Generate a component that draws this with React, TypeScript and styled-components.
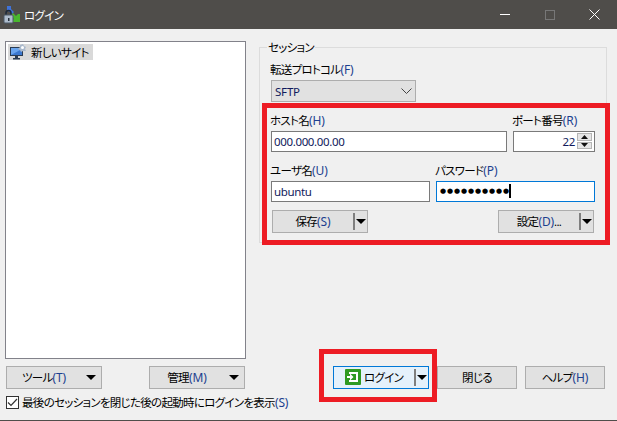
import styled, { createGlobalStyle } from 'styled-components';

const GlobalStyle = createGlobalStyle`
  html, body {
    margin: 0;
    padding: 0;
    background: #f0f0f0;
  }
  * {
    box-sizing: border-box;
  }
`;

const LATIN_BLUE = '#1c3f8f';

const Window = styled.div`
  width: 617px;
  height: 421px;
  position: relative;
  overflow: hidden;
  display: flex;
  flex-direction: column;
  background: #f0f0f0;
  border-bottom: 1px solid #4f4d4a;
  color: #000;
  font-family: "Noto Sans", "Noto Sans CJK JP", sans-serif;
  font-size: 11.5px;
  letter-spacing: -0.7px;
  font-feature-settings: "palt";
`;

const TitleBar = styled.div`
  height: 29px;
  flex-shrink: 0;
  display: flex;
  align-items: center;
  padding-left: 3px;
  background: #4f4d4a;
  color: #fff;
`;

const TitleText = styled.span`
  margin-left: 3px;
`;

const WindowControls = styled.div`
  margin-left: auto;
  display: flex;
`;

const ControlButton = styled.div`
  width: 45px;
  height: 29px;
  display: flex;
  align-items: center;
  justify-content: center;
`;

const Content = styled.div`
  flex: 1;
  display: flex;
  padding: 12px 0 0 5px;
`;

const LeftColumn = styled.div`
  width: 241px;
  display: flex;
  flex-direction: column;
`;

const SiteTree = styled.div`
  height: 318px;
  padding: 2px;
  background: #fff;
  border: 1px solid #82828a;
`;

const SiteRow = styled.div`
  width: 85px;
  height: 16px;
  display: flex;
  align-items: center;
  gap: 4px;
  padding-left: 2px;
  background: #d9d9d9;
  white-space: nowrap;
`;

const LeftButtons = styled.div`
  margin: 7px 1px 0;
  display: flex;
  justify-content: space-between;
`;

const CheckRow = styled.label`
  margin: 6px 0 0 1px;
  display: flex;
  align-items: center;
  gap: 3px;
  height: 14px;
  white-space: nowrap;
`;

const CheckBox = styled.span`
  width: 13px;
  height: 13px;
  display: flex;
  align-items: center;
  justify-content: center;
  background: #fff;
  border: 1px solid #333;
`;

const RightColumn = styled.div`
  margin-left: 13px;
  width: 348px;
  display: flex;
  flex-direction: column;
`;

const GroupBox = styled.div`
  margin-top: 6px;
  height: 196px;
  position: relative;
  padding: 15px 0 0 11px;
  border: 1px solid #dcdcdc;
`;

const GroupLegend = styled.span`
  position: absolute;
  top: -7px;
  left: 7px;
  padding: 0 1px;
  line-height: 13px;
  background: #f0f0f0;
`;

const FieldLabel = styled.div`
  height: 16px;
  line-height: 14px;
  margin-left: -1px;
  white-space: nowrap;
`;

const SelectBox = styled.div`
  width: 145px;
  height: 22px;
  margin-top: 1px;
  display: flex;
  align-items: center;
  justify-content: space-between;
  padding: 0 3px;
  background: #e1e1e1;
  border: 1px solid #adadad;
  color: #111a5c;
  letter-spacing: -0.2px;
`;

const FieldRow = styled.div<{ $top: number }>`
  margin-top: ${(p) => p.$top}px;
  display: flex;
  gap: 6px;
`;

const Field = styled.div<{ $width: number }>`
  width: ${(p) => p.$width}px;
`;

const TextBox = styled.div<{ $focused?: boolean; $height: number }>`
  height: ${(p) => p.$height}px;
  margin-top: 1px;
  display: flex;
  align-items: center;
  padding: 0 2px 1px;
  background: #fff;
  border: 1px solid ${(p) => (p.$focused ? '#0078d7' : '#7a7a7a')};
  color: #111a5c;
  letter-spacing: -0.35px;
`;

const PortValue = styled.span`
  margin-left: auto;
  margin-right: 2px;
`;

const PasswordDots = styled.span`
  margin-left: 1px;
  font-size: 7px;
  font-family: "DejaVu Sans", sans-serif;
  letter-spacing: 0.9px;
  color: #000;
`;

const Caret = styled.span`
  width: 2px;
  height: 14px;
  margin-left: -1px;
  background: #000;
`;

const Spinner = styled.div`
  width: 15px;
  height: 16px;
  display: flex;
  flex-direction: column;
  gap: 1px;
`;

const SpinButton = styled.div`
  flex: 1;
  display: flex;
  align-items: center;
  justify-content: center;
  background: #e6e6e6;
  border: 1px solid #b5b5b5;
`;

const GroupButtons = styled.div`
  margin: 8px 12px 0 1px;
  display: flex;
  justify-content: space-between;
`;

const Button = styled.div<{ $width: number; $primary?: boolean }>`
  width: ${(p) => p.$width}px;
  height: 23px;
  padding-bottom: 1px;
  display: flex;
  align-items: center;
  justify-content: center;
  flex-shrink: 0;
  white-space: nowrap;
  background: ${(p) => (p.$primary ? '#e5f1fb' : '#e1e1e1')};
  border: 1px solid ${(p) => (p.$primary ? '#0078d7' : '#adadad')};
`;

const ButtonLabel = styled.span`
  flex: 1;
  display: flex;
  align-items: center;
  justify-content: center;
`;

const ButtonIcon = styled.span`
  display: flex;
  margin-right: 3px;
`;

const SplitDivider = styled.span`
  width: 2px;
  height: 17px;
  background: #7f7f7f;
`;

const ArrowZone = styled.span<{ $width: number }>`
  width: ${(p) => p.$width}px;
  display: flex;
  justify-content: center;
`;

const Arrow = styled.span`
  width: 0;
  height: 0;
  border-left: 5px solid transparent;
  border-right: 5px solid transparent;
  border-top: 5px solid #000;
`;

const Accel = styled.span`
  color: ${LATIN_BLUE};
  font-size: 12px;
  letter-spacing: -0.1px;
`;

const DialogButtons = styled.div`
  margin: 123px 0 0 74px;
  display: flex;
  gap: 8px;
`;

const RedFrame = styled.div<{ $x: number; $y: number; $w: number; $h: number }>`
  position: absolute;
  left: ${(p) => p.$x}px;
  top: ${(p) => p.$y}px;
  width: ${(p) => p.$w}px;
  height: ${(p) => p.$h}px;
  border: 5px solid #ed1c24;
  pointer-events: none;
`;

function AppIcon() {
  return (
    <svg width="18" height="18" viewBox="0 0 18 18">
      <path d="M4 0h4v3l3 3-2 2-5-4z" fill="#3f73d8" />
      <path d="M10 7l3 3 2-2 2 0v8H9v-2l2-1-3-3z" fill="#49b82e" />
      <path d="M3 9V7a2.5 2.5 0 0 1 5 0v2" fill="none" stroke="#1d2a3a" strokeWidth="1.5" />
      <rect x="1" y="9" width="9" height="8" rx="1" fill="#aebccc" stroke="#4d5a68" />
      <rect x="5" y="12" width="1.5" height="3" fill="#26303a" />
    </svg>
  );
}

function SiteIcon() {
  return (
    <svg width="17" height="16" viewBox="0 0 17 16">
      <rect x="0.5" y="3.5" width="12" height="8" fill="#6aa5ee" stroke="#2b3c52" />
      <path d="M1 11l11-6v6z" fill="#3c78cf" />
      <rect x="5" y="12" width="3" height="2" fill="#2b3c52" />
      <rect x="3" y="14" width="7" height="1.5" fill="#2b3c52" />
      <path d="M13 0l1 2 2 1-1 2 1 2-3 0-2 1-1-2-2-1 2-2 0-2z" fill="#aab9cc" />
      <circle cx="12.5" cy="3.5" r="1.5" fill="#fff" />
    </svg>
  );
}

function LoginIcon() {
  return (
    <svg width="16" height="16" viewBox="0 0 16 16">
      <rect width="16" height="16" rx="1" fill="#2f9a22" />
      <path d="M4 3h9v10H4v-2h7V5H4z" fill="#fff" />
      <path d="M2 7h3V4.5L8.5 8 5 11.500V9H2z" fill="#fff" />
    </svg>
  );
}

function Chevron() {
  return (
    <svg width="11" height="6" viewBox="0 0 11 6">
      <path d="M0.5 0.5l5 5 5-5" fill="none" stroke="#444" />
    </svg>
  );
}

function SpinArrow({ up }: { up?: boolean }) {
  return (
    <svg width="7" height="4" viewBox="0 0 7 4">
      <path d={up ? 'M3.5 0L7 4H0z' : 'M0 0h7L3.5 4z'} fill="#111" />
    </svg>
  );
}

export default function App() {
  return (
    <>
      <GlobalStyle />
      <Window>
        <TitleBar>
          <AppIcon />
          <TitleText>ログイン</TitleText>
          <WindowControls>
            <ControlButton>
              <svg width="10" height="1" viewBox="0 0 10 1">
                <rect width="10" height="1" fill="#fff" />
              </svg>
            </ControlButton>
            <ControlButton>
              <svg width="10" height="10" viewBox="0 0 10 10">
                <rect x="0.5" y="0.5" width="9" height="9" fill="none" stroke="#777" />
              </svg>
            </ControlButton>
            <ControlButton>
              <svg width="11" height="11" viewBox="0 0 11 11">
                <path d="M0.5 0.5l10 10M10.5 0.5l-10 10" stroke="#fff" />
              </svg>
            </ControlButton>
          </WindowControls>
        </TitleBar>
        <Content>
          <LeftColumn>
            <SiteTree>
              <SiteRow>
                <SiteIcon />
                新しいサイト
              </SiteRow>
            </SiteTree>
            <LeftButtons>
              <Button $width={96}>
                <ButtonLabel><span>ツール<Accel>(T)</Accel></span></ButtonLabel>
                <ArrowZone $width={20}><Arrow /></ArrowZone>
              </Button>
              <Button $width={96}>
                <ButtonLabel><span>管理<Accel>(M)</Accel></span></ButtonLabel>
                <ArrowZone $width={20}><Arrow /></ArrowZone>
              </Button>
            </LeftButtons>
            <CheckRow>
              <CheckBox>
                <svg width="11" height="9" viewBox="0 0 11 9">
                  <path d="M1 4.500l3 3 6-6.500" fill="none" stroke="#333" strokeWidth="1.2" />
                </svg>
              </CheckBox>
              <span>最後のセッションを閉じた後の起動時にログインを表示<Accel>(S)</Accel></span>
            </CheckRow>
          </LeftColumn>
          <RightColumn>
            <GroupBox>
              <GroupLegend>セッション</GroupLegend>
              <FieldLabel>転送プロトコル<Accel>(F)</Accel></FieldLabel>
              <SelectBox>
                SFTP
                <Chevron />
              </SelectBox>
              <FieldRow $top={12}>
                <Field $width={236}>
                  <FieldLabel>ホスト名<Accel>(H)</Accel></FieldLabel>
                  <TextBox $height={21}>000.000.00.00</TextBox>
                </Field>
                <Field $width={82}>
                  <FieldLabel>ポート番号<Accel>(R)</Accel></FieldLabel>
                  <TextBox $height={21}>
                    <PortValue>22</PortValue>
                    <Spinner>
                      <SpinButton><SpinArrow up /></SpinButton>
                      <SpinButton><SpinArrow /></SpinButton>
                    </Spinner>
                  </TextBox>
                </Field>
              </FieldRow>
              <FieldRow $top={12}>
                <Field $width={159}>
                  <FieldLabel>ユーザ名<Accel>(U)</Accel></FieldLabel>
                  <TextBox $height={21}>ubuntu</TextBox>
                </Field>
                <Field $width={159}>
                  <FieldLabel>パスワード<Accel>(P)</Accel></FieldLabel>
                  <TextBox $height={21} $focused>
                    <PasswordDots>●●●●●●●●●●</PasswordDots>
                    <Caret />
                  </TextBox>
                </Field>
              </FieldRow>
              <GroupButtons>
                <Button $width={96}>
                  <ButtonLabel><span>保存<Accel>(S)</Accel></span></ButtonLabel>
                  <SplitDivider />
                  <ArrowZone $width={12}><Arrow /></ArrowZone>
                </Button>
                <Button $width={96}>
                  <ButtonLabel><span>設定<Accel>(D)</Accel>...</span></ButtonLabel>
                  <SplitDivider />
                  <ArrowZone $width={12}><Arrow /></ArrowZone>
                </Button>
              </GroupButtons>
            </GroupBox>
            <DialogButtons>
              <Button $width={96} $primary>
                <ButtonLabel>
                  <ButtonIcon><LoginIcon /></ButtonIcon>
                  ログイン
                </ButtonLabel>
                <SplitDivider />
                <ArrowZone $width={12}><Arrow /></ArrowZone>
              </Button>
              <Button $width={80}>閉じる</Button>
              <Button $width={80}><span>ヘルプ<Accel>(H)</Accel></span></Button>
            </DialogButtons>
          </RightColumn>
        </Content>
        <RedFrame $x={262} $y={103} $w={348} $h={142} />
        <RedFrame $x={319} $y={349} $w={118} $h={53} />
      </Window>
    </>
  );
}
